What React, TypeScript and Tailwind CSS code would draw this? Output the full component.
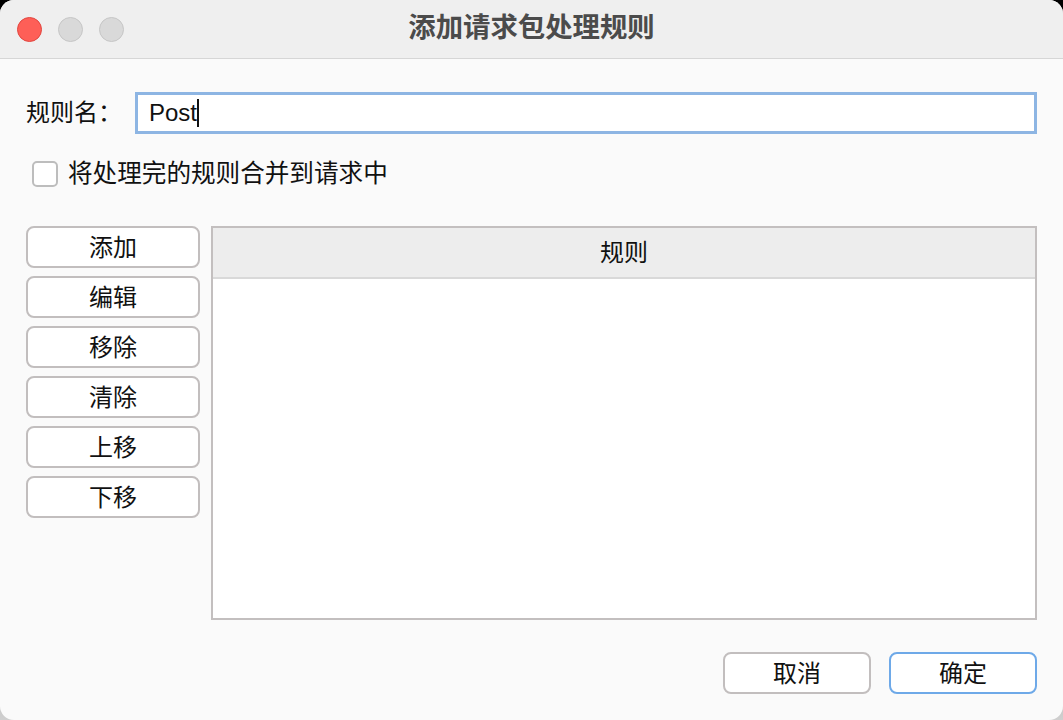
import React from "react";

const font = { fontFamily: '"Liberation Sans", "Noto Sans CJK SC", sans-serif' };

function SideButton({ label }: { label: string }) {
  return (
    <div className="h-[42px] w-full rounded-[8px] border-2 border-[#c2bebe] bg-white flex items-center justify-center text-[24px] leading-none text-[#111]">
      <span className="mt-[1px]">{label}</span>
    </div>
  );
}

export default function App() {
  return (
    <div className="w-[1063px] h-[720px] bg-gradient-to-b from-black to-[#cfcfcf]" style={font}>
      <div className="w-full h-full rounded-[14px] overflow-hidden bg-[#fafafa] flex flex-col">
        {/* title bar */}
        <div className="relative h-[59px] shrink-0 bg-[#efefef] border-b border-[#d6d6d6] flex items-center">
          <div className="flex items-center gap-[16px] pl-[17px]">
            <div className="w-[25px] h-[25px] rounded-full bg-[#fe5f57] border border-[#e2463f]" />
            <div className="w-[25px] h-[25px] rounded-full bg-[#d9d9d9] border border-[#c6c6c6]" />
            <div className="w-[25px] h-[25px] rounded-full bg-[#d9d9d9] border border-[#c6c6c6]" />
          </div>
          <div className="absolute inset-0 flex items-center justify-center pointer-events-none">
            <span className="text-[27.4px] font-bold leading-none text-[#4b4b4b] -mt-[3px]">添加请求包处理规则</span>
          </div>
        </div>

        {/* body */}
        <div className="flex-1 flex flex-col px-[26px]">
          <div className="mt-[33px] h-[42px] flex items-center">
            <div className="w-[109px] text-[24px] leading-none text-[#111]">规则名：</div>
            <div className="flex-1 h-[42px] bg-white border-[3px] border-[#8db5e3] flex items-center pl-[11px]">
              <span className="text-[24px] leading-none text-[#111]">Post</span>
              <span className="w-[2px] h-[28px] bg-[#111]" />
            </div>
          </div>

          <div className="mt-[27px] h-[26px] flex items-center pl-[6px]">
            <div className="w-[26px] h-[26px] rounded-[5px] border-2 border-[#bdbdbd] bg-white" />
            <span className="ml-[10px] mt-[1px] text-[24.6px] leading-none text-[#111]">将处理完的规则合并到请求中</span>
          </div>

          <div className="mt-[39px] flex gap-[11px]">
            <div className="w-[174px] flex flex-col gap-[8px]">
              <SideButton label="添加" />
              <SideButton label="编辑" />
              <SideButton label="移除" />
              <SideButton label="清除" />
              <SideButton label="上移" />
              <SideButton label="下移" />
            </div>
            <div className="flex-1 h-[394px] border-2 border-[#c3bfbf] bg-white flex flex-col">
              <div className="h-[51px] bg-[#ededed] border-b-2 border-[#d9d9d9] flex items-center justify-center">
                <span className="text-[24px] leading-none text-[#111] mt-[1px]">规则</span>
              </div>
              <div className="flex-1" />
            </div>
          </div>

          <div className="mt-[32px] flex justify-end gap-[18px]">
            <div className="w-[148px] h-[42px] rounded-[8px] border-2 border-[#c2bebe] bg-white flex items-center justify-center text-[24px] leading-none text-[#111]">
              <span className="mt-[1px]">取消</span>
            </div>
            <div className="w-[148px] h-[42px] rounded-[8px] border-2 border-[#6ea9e8] bg-white flex items-center justify-center text-[24px] leading-none text-[#111]">
              <span className="mt-[1px]">确定</span>
            </div>
          </div>
        </div>
      </div>
    </div>
  );
}
